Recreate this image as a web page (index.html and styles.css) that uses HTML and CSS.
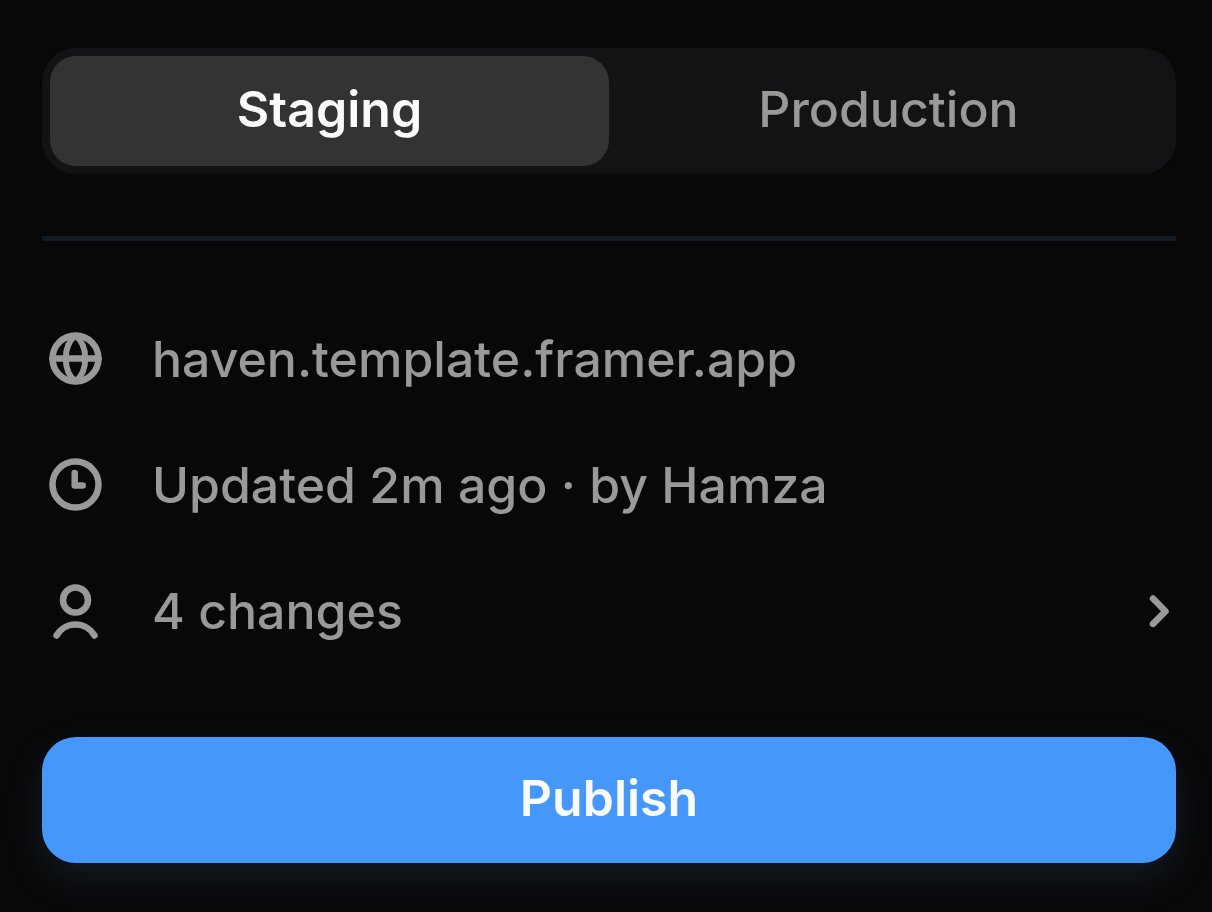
FILE: index.html
```html
<!DOCTYPE html>
<html lang="en">
  <head>
    <meta charset="utf-8">
    <title>Publish</title>
    <meta name="viewport" content="width=device-width, initial-scale=1.0">
    <link rel="stylesheet" href="styles.css">
  </head>
  <body>
    <main class="panel">

      <div class="tabs" role="tablist" aria-label="Environment">
        <button class="tab tab-active" type="button" role="tab" aria-selected="true">Staging</button>
        <button class="tab" type="button" role="tab" aria-selected="false">Production</button>
      </div>

      <hr class="divider">

      <ul class="details">
        <li class="detail">
          <svg class="icon" viewBox="0 0 54 54" stroke-width="6.5" aria-hidden="true">
            <circle cx="26.500" cy="26.500" r="23"/>
            <path stroke-width="6" d="M26.500 3.500C13.500 14 13.500 39 26.500 49.500C39.500 39 39.500 14 26.500 3.500z"/>
            <path d="M3.500 26.500h46"/>
          </svg>
          <span>haven.template.framer.app</span>
        </li>
        <li class="detail">
          <svg class="icon" viewBox="0 0 54 54" stroke-width="6.5" aria-hidden="true">
            <circle cx="26.500" cy="26.500" r="23"/>
            <path d="M25.700 15v12.500h8"/>
          </svg>
          <span>Updated 2m ago · by Hamza</span>
        </li>
        <li class="detail">
          <svg class="icon" viewBox="0 0 54 54" stroke-width="6.5" aria-hidden="true">
            <circle cx="26.500" cy="16" r="12.500"/>
            <path d="M7.500 51.500a22 22 0 0 1 38 0"/>
          </svg>
          <span>4 changes</span>
          <button class="more" type="button" aria-label="Show changes">
            <svg class="chevron" viewBox="0 0 20 34" stroke-width="6.500" aria-hidden="true">
              <path d="M4 4.500l12.500 12.700l-12.500 12.700"/>
            </svg>
          </button>
        </li>
      </ul>

      <button class="publish" type="button">Publish</button>

    </main>
  </body>
</html>
```

FILE: styles.css
```css
*,
*:before,
*:after {
  box-sizing: border-box;
}

body {
  margin: 0;
  background: #080808;
  color: #999;
  font-family: Inter, "Liberation Sans", sans-serif;
  font-size: 50px;
  font-weight: 500;
  line-height: 62px;
}

button {
  padding: 0;
  border: 0;
  background: none;
  color: inherit;
  font: inherit;
  cursor: pointer;
}

.panel {
  padding: 48px 36px 49px 42px;
}

.tabs {
  display: flex;
  height: 126px;
  padding: 8px;
  border-radius: 34px;
  background: #121315;
}

.tab {
  flex: 1;
  padding-bottom: 4px;
  border-radius: 26px;
}

.tab-active {
  background: #333;
  color: #fafafa;
  font-weight: 600;
}

.divider {
  height: 5px;
  margin: 62px 0 55px;
  border: 0;
  background: #141a21;
}

.details {
  margin: 0;
  padding: 0;
  list-style: none;
}

.detail {
  display: flex;
  align-items: center;
  gap: 49px;
  height: 126px;
  padding: 0 7px;
}

.icon,
.chevron {
  flex: none;
  fill: none;
  stroke: #999;
  stroke-linecap: round;
  stroke-linejoin: round;
}

.icon {
  width: 54px;
  height: 54px;
  overflow: visible;
}

.more {
  display: flex;
  margin-left: auto;
}

.chevron {
  width: 20px;
  height: 34px;
}

.publish {
  display: block;
  width: 100%;
  height: 126px;
  margin-top: 63px;
  padding-bottom: 4px;
  border-radius: 34px;
  background: #4597fa;
  box-shadow: 0 16px 42px rgba(90, 145, 210, .14);
  color: #fafafa;
  font-weight: 600;
}
```
